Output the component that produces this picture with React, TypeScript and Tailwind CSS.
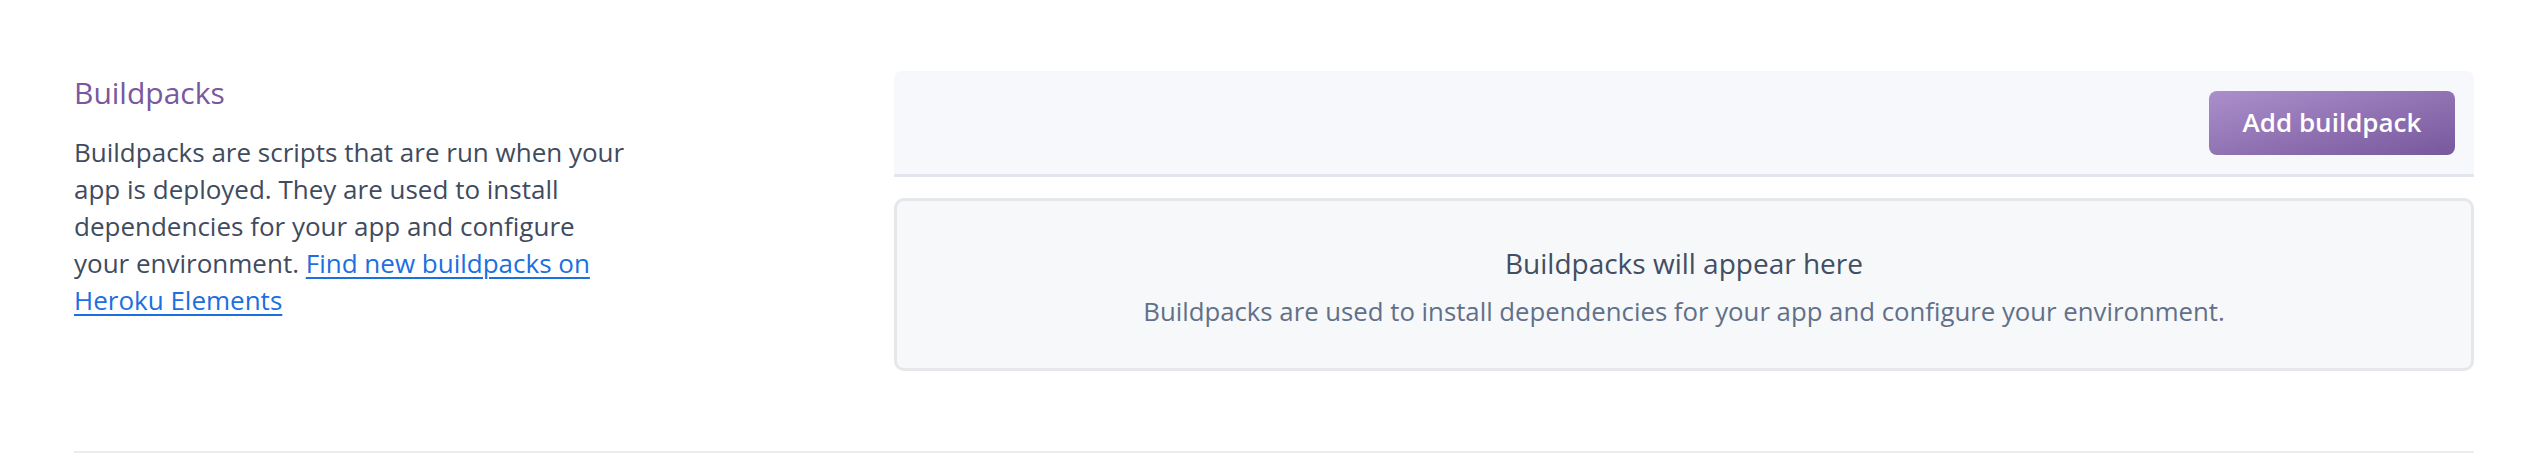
import React from "react";

export default function App() {
  return (
    <div className="bg-white w-[2538px] h-[460px] overflow-hidden" style={{ fontFamily: '"Open Sans", "Noto Sans", sans-serif' }}>
      <div className="ml-[74px] w-[2400px] pt-[71px]">
        <div className="flex">
          <div className="w-[820px] shrink-0">
            <h2 className="text-[30px] leading-[40px] text-[#79589f] mt-[2px]">Buildpacks</h2>
            <p className="mt-[21px] w-[554px] text-[26px] leading-[37px] text-[#3f4b5e]">
              Buildpacks are scripts that are run when your app is deployed. They are used to install dependencies for your app and configure your environment.{" "}
              <a href="#" className="text-[#1c6fe0] underline underline-offset-[4px] decoration-[2px]">Find new buildpacks on Heroku Elements</a>
            </p>
          </div>
          <div className="flex-1">
            <div className="h-[106px] bg-[#f7f8fb] rounded-t-[8px] border-b-[3px] border-[#e1e6ee] flex items-center justify-end pr-[19px]">
              <button className="h-[64px] w-[246px] rounded-[8px] bg-gradient-to-br from-[#ab8fcb] to-[#78589d] text-white text-[26px] font-semibold">
                Add buildpack
              </button>
            </div>
            <div className="mt-[21px] h-[173px] bg-[#f7f8fa] border-[3px] border-[#e5e7ea] rounded-[10px] flex flex-col items-center justify-center">
              <div className="text-[28px] leading-[38px] text-[#424e62] mt-[2px]">Buildpacks will appear here</div>
              <div className="mt-[12px] text-[25.75px] leading-[34px] text-[#617089]">
                Buildpacks are used to install dependencies for your app and configure your environment.
              </div>
            </div>
          </div>
        </div>
        <div className="mt-[80px] h-[2px] bg-[#e9ecf1]" />
      </div>
    </div>
  );
}
